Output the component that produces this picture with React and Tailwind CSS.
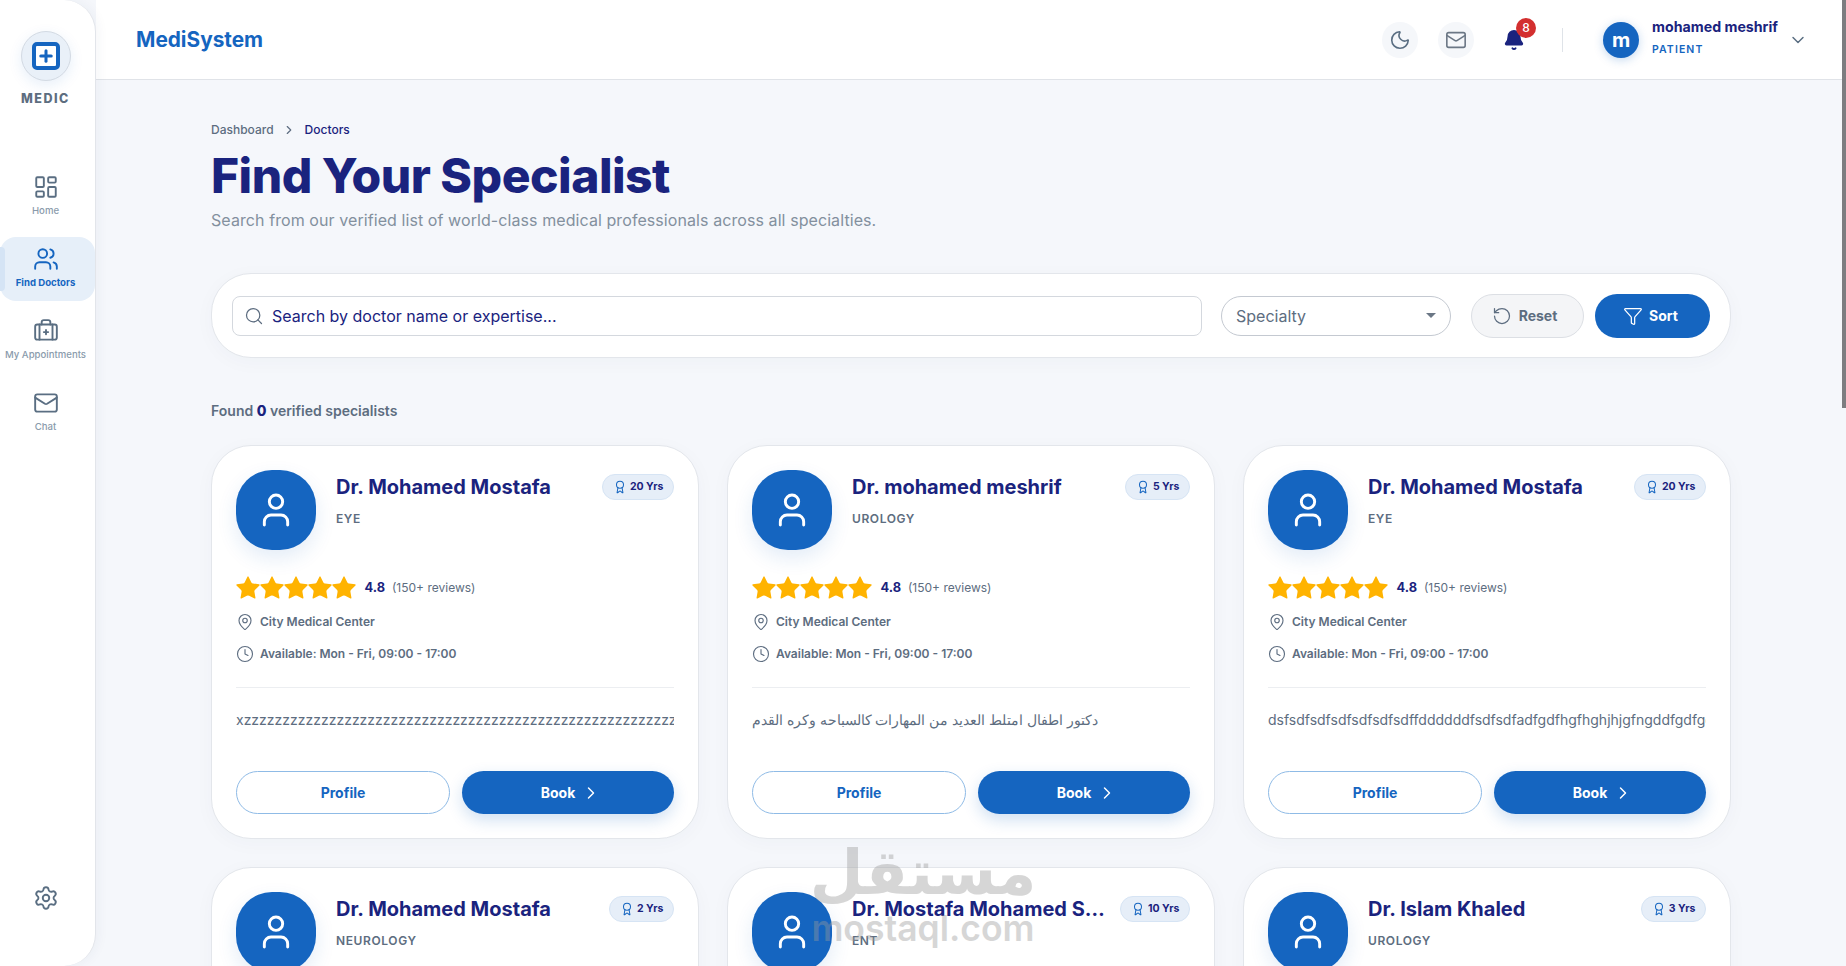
import {
  Award, Bell, BriefcaseMedical, ChevronDown, ChevronRight, Clock, Funnel, LayoutDashboard,
  Mail, MapPin, Moon, Plus, RotateCcw, Search, Settings, Star, User, Users,
} from "lucide-react";

const doctors = [
  { name: "Dr. Mohamed Mostafa", spec: "EYE", yrs: "20 Yrs", bio: "xzzzzzzzzzzzzzzzzzzzzzzzzzzzzzzzzzzzzzzzzzzzzzzzzzzzzzzzzzzzzzzzzzzzz" },
  { name: "Dr. mohamed meshrif", spec: "UROLOGY", yrs: "5 Yrs", arabic: true, bio: "دكتور اطفال امتلط العديد من المهارات كالسباحه وكره القدم" },
  { name: "Dr. Mohamed Mostafa", spec: "EYE", yrs: "20 Yrs", bio: "dsfsdfsdfsdfsdfsdfsdffddddddfsdfsdfadfgdfhgfhghjhjgfngddfgdfgdfgdfg" },
  { name: "Dr. Mohamed Mostafa", spec: "NEUROLOGY", yrs: "2 Yrs", bio: "" },
  { name: "Dr. Mostafa Mohamed Salem", spec: "ENT", yrs: "10 Yrs", bio: "" },
  { name: "Dr. Islam Khaled", spec: "UROLOGY", yrs: "3 Yrs", bio: "" },
];

const navItems = [
  { label: "Home", icon: LayoutDashboard },
  { label: "Find Doctors", icon: Users, active: true },
  { label: "My Appointments", icon: BriefcaseMedical },
  { label: "Chat", icon: Mail },
];

function Sidebar() {
  return (
    <aside className="relative z-10 flex w-[96px] shrink-0 flex-col items-center rounded-r-[32px] border-r border-[#e2e5ea] bg-white pr-[4px] shadow-[2px_0_12px_rgba(30,50,90,0.05)]">
      <div className="mt-[31px] flex h-[50px] w-[50px] items-center justify-center rounded-full border border-[#d3dae3] bg-[#e9f0f8] shadow-[0_4px_14px_rgba(21,101,192,0.1)]">
        <div className="flex h-[28px] w-[28px] items-center justify-center rounded-[5px] border-[4px] border-[#1565c0] bg-white">
          <Plus size={18} strokeWidth={4} className="shrink-0 text-[#1565c0]" />
        </div>
      </div>
      <div className="mt-[8px] text-[12.5px] leading-[20px] font-extrabold tracking-[1.5px] text-[#5d6d80]">MEDIC</div>
      <nav className="mt-[56px] -mr-[4px] flex w-[95px] flex-col gap-[8px]">
        {navItems.map((item) => (
          <div
            key={item.label}
            className={`relative flex h-[64px] w-full flex-col items-center justify-center rounded-[16px] pr-[4px] pb-[3px] ${item.active ? "bg-[#e6eff9]" : ""}`}
          >
            {item.active && <span className="absolute top-[10px] left-0 h-[44px] w-[5px] rounded-r-[4px] bg-[#d5e4f5]" />}
            <item.icon size={26} strokeWidth={1.75} className={item.active ? "text-[#1565c0]" : "text-[#5a6e82]"} />
            <span className={`mt-[5px] text-[9.6px] leading-[12px] whitespace-nowrap ${item.active ? "font-bold text-[#1565c0]" : "font-medium text-[#8a9bac]"}`}>
              {item.label}
            </span>
          </div>
        ))}
      </nav>
      <div className="mt-auto mb-[55px]">
        <Settings size={26} strokeWidth={1.75} className="text-[#5a6e82]" />
      </div>
    </aside>
  );
}

function Header() {
  return (
    <header className="flex h-[80px] shrink-0 items-center border-b border-[#e0e3e8] bg-white pr-[38px] pl-[40px]">
      <div className="text-[20.8px] font-bold text-[#1565c0]">MediSystem</div>
      <div className="ml-auto flex items-center">
        <div className="flex h-[36px] w-[36px] items-center justify-center rounded-full bg-[#f5f7fa]">
          <Moon size={22} strokeWidth={1.75} className="text-[#5a6e82]" />
        </div>
        <div className="ml-[20px] flex h-[36px] w-[36px] items-center justify-center rounded-full bg-[#f5f7fa]">
          <Mail size={22} strokeWidth={1.75} className="text-[#6b7785]" />
        </div>
        <div className="relative ml-[22px] flex h-[36px] w-[36px] items-center justify-center">
          <Bell size={22} fill="#1a237e" className="text-[#1a237e]" />
          <span className="absolute top-[-4px] right-[-4px] flex h-[20px] w-[20px] items-center justify-center rounded-full bg-[#d32f2f] text-[12px] font-medium text-white">8</span>
        </div>
        <div className="mr-[40px] ml-[30px] h-[24px] w-px bg-[#dfe3e8]" />
        <div className="flex h-[36px] w-[36px] items-center justify-center rounded-full bg-[#1565c0] text-[20px] font-bold text-white shadow-[0_2px_10px_rgba(21,101,192,0.25)]">m</div>
        <div className="ml-[13px] flex flex-col pb-[5px]">
          <span className="text-[14.2px] leading-[20px] font-bold text-[#1a237e]">mohamed meshrif</span>
          <span className="mt-[5px] text-[10.5px] leading-[16px] font-semibold tracking-[1.1px] text-[#1565c0]">PATIENT</span>
        </div>
        <ChevronDown size={20} strokeWidth={1.75} className="ml-[10px] text-[#5a6e82]" />
      </div>
    </header>
  );
}

function DoctorCard({ doctor }) {
  return (
    <div className="flex h-[394px] flex-col rounded-[40px] border border-[#e3e6eb] bg-white p-[24px] shadow-[0_4px_20px_rgba(30,50,90,0.03)]">
      <div className="flex">
        <div className="flex h-[80px] w-[80px] shrink-0 items-center justify-center rounded-[36px] bg-[#1565c0] shadow-[0_8px_20px_rgba(21,101,192,0.12)]">
          <User size={40} strokeWidth={1.75} className="text-white" />
        </div>
        <div className="ml-[20px] min-w-0 flex-1">
          <div className="flex items-start justify-between gap-[10px] pt-[1px]">
            <div className="truncate text-[20px] leading-[32px] font-bold text-[#1a237e]">{doctor.name}</div>
            <div className="mt-[3px] flex h-[26px] shrink-0 items-center gap-[3px] rounded-full border border-[#d6e4f4] bg-[#e6eef8] px-[9.5px] text-[10.5px] font-bold text-[#1a237e]">
              <Award size={14} strokeWidth={1.75} className="text-[#1565c0]" />
              {doctor.yrs}
            </div>
          </div>
          <div className="mt-[8px] text-[12px] leading-[16px] font-semibold tracking-[0.6px] text-[#5d6d80]">{doctor.spec}</div>
        </div>
      </div>

      <div className="mt-[24px] flex items-center">
        {[0, 1, 2, 3, 4].map((i) => (
          <Star key={i} size={28} fill="#ffb300" strokeWidth={0} className="-mx-[2px] text-[#ffb300]" />
        ))}
        <span className="ml-[8.5px] text-[12.8px] font-bold text-[#1a237e]">4.8</span>
        <span className="ml-[7px] text-[12px] text-[#5d6d80]">(150+ reviews)</span>
      </div>

      <div className="mt-[10px] flex h-[20px] items-center gap-[6px] text-[12px] font-semibold text-[#5d6d80]">
        <MapPin size={18} strokeWidth={1.5} />
        City Medical Center
      </div>
      <div className="mt-[12px] flex h-[20px] items-center gap-[6px] text-[12px] font-semibold text-[#5d6d80]">
        <Clock size={18} strokeWidth={1.5} />
        Available: Mon - Fri, 09:00 - 17:00
      </div>

      <div className="mt-[23px] h-px bg-[#eceef1]" />

      <div className={`mt-[22px] h-[20px] overflow-hidden leading-[20px] whitespace-nowrap text-[#5d6d80] ${doctor.arabic ? "text-[13.6px]" : "text-[14px]"}`}>{doctor.bio}</div>

      <div className="mt-auto flex gap-[12px]">
        <button className="h-[43px] w-[214px] rounded-full border border-[#8fbbe6] bg-white text-[14px] font-bold text-[#1565c0]">Profile</button>
        <button className="flex h-[43px] flex-1 items-center justify-center gap-[6px] rounded-full bg-[#1565c0] pl-[6px] text-[14px] font-bold text-white shadow-[0_6px_16px_rgba(21,101,192,0.2)]">
          Book
          <ChevronRight size={20} strokeWidth={1.75} />
        </button>
      </div>
    </div>
  );
}

export default function App() {
  return (
    <div className="relative flex h-screen overflow-hidden bg-[#f5f7fb] font-['Inter',sans-serif]">
      <Sidebar />
      <div className="flex min-w-0 flex-1 flex-col">
        <Header />
        <main className="min-h-0 flex-1 overflow-hidden pr-[115px] pl-[115px]">
          <div className="mt-[42px] flex items-center gap-[8.5px] text-[12px] leading-[16px] font-medium">
            <span className="text-[#5d6d80]">Dashboard</span>
            <ChevronRight size={14} className="text-[#5d6d80]" />
            <span className="text-[#1a237e]">Doctors</span>
          </div>
          <h1 className="mt-[8px] text-[48px] leading-[60px] font-extrabold tracking-[-0.5px] text-[#1a237e]">Find Your Specialist</h1>
          <p className="mt-[2px] text-[16px] leading-[24px] tracking-[0.08px] text-[#83909e]">Search from our verified list of world-class medical professionals across all specialties.</p>

          <div className="mt-[41px] flex h-[85px] items-center rounded-[40px] border border-[#e3e6eb] bg-white px-[20px] shadow-[0_4px_20px_rgba(30,50,90,0.03)]">
            <div className="flex h-[40px] flex-1 items-center rounded-[8px] border border-[#d4d8de] pl-[11px]">
              <Search size={20} strokeWidth={1.5} className="text-[#5d6d80]" />
              <span className="ml-[8px] text-[16px] text-[#1a237e]">Search by doctor name or expertise...</span>
            </div>
            <div className="ml-[19px] flex h-[40px] w-[230px] items-center justify-between rounded-full border border-[#c4c9d1] px-[14px]">
              <span className="pt-[1px] text-[16px] text-[#5d6d80]">Specialty</span>
              <span className="h-0 w-0 border-x-[5px] border-t-[5px] border-x-transparent border-t-[#6b7785]" />
            </div>
            <button className="ml-[20px] flex h-[44px] w-[113px] items-center justify-center gap-[7px] rounded-full border border-[#dcdfe4] bg-[#f4f5f7] pr-[6px] text-[14px] font-bold text-[#5d6d80]">
              <RotateCcw size={20} strokeWidth={1.5} />
              Reset
            </button>
            <button className="ml-[11px] flex h-[44px] w-[115px] items-center justify-center gap-[6px] rounded-full bg-[#1565c0] pr-[4px] text-[14px] font-bold text-white">
              <Funnel size={20} strokeWidth={1.5} />
              Sort
            </button>
          </div>

          <div className="mt-[43px] text-[14px] leading-[20px] font-semibold text-[#5d6d80]">
            Found <span className="font-extrabold text-[#1a237e]">0</span> verified specialists
          </div>

          <div className="mt-[24px] grid grid-cols-3 gap-[28px]">
            {doctors.map((doctor, i) => (
              <DoctorCard key={i} doctor={doctor} />
            ))}
          </div>
        </main>
      </div>

      {/* scrollbar thumb */}
      <div className="absolute top-0 right-0 h-[408px] w-[4px] bg-[#7d7d80]" />

      {/* watermark */}
      <div className="pointer-events-none absolute top-[836px] left-[803px] flex w-[240px] flex-col items-center text-[#9a9a9a] opacity-40">
        <span dir="rtl" className="font-['DejaVu_Sans',sans-serif] text-[62px] leading-[73px] font-bold">مستقل</span>
        <span className="text-[35.5px] leading-[40px] font-semibold">mostaql.com</span>
      </div>
    </div>
  );
}
